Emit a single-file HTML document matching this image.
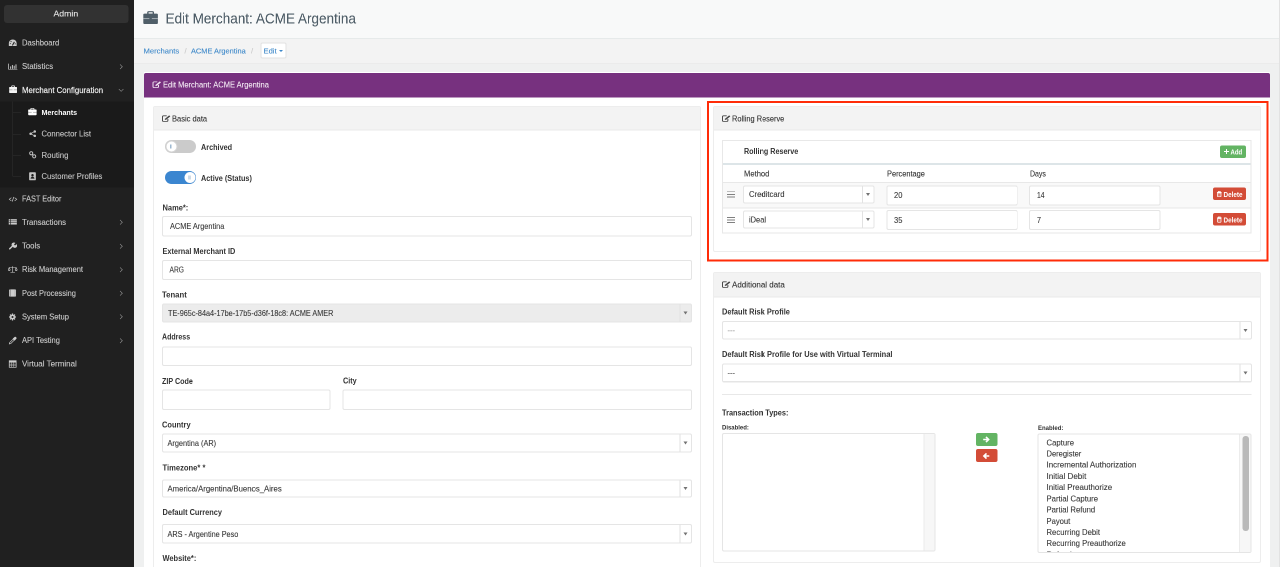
<!DOCTYPE html>
<html><head><meta charset="utf-8">
<style>
*{box-sizing:border-box}
html,body{margin:0;padding:0}
body{width:1280px;height:567px;overflow:hidden;position:relative;background:#eff0f0;font-family:"Liberation Sans",sans-serif;color:#333}
#w{position:absolute;left:0;top:0;width:2560px;height:1134px;transform:scale(0.5);transform-origin:0 0;will-change:transform}
.a{position:absolute}
.t{position:absolute;white-space:nowrap;line-height:1;}
.chev{position:absolute;width:6.8px;height:6.8px;border-right:1.8px solid #a8a8a8;border-top:1.8px solid #a8a8a8}
.ar{position:absolute;width:0;height:0;border-left:5px solid transparent;border-right:5px solid transparent;border-top:6px solid #777}
</style></head>
<body><div id="w">
<div class="a" style="left:0;top:0;width:268px;height:1134px;background:#202020"></div>
<div class="a" style="left:8px;top:9.6px;width:249.2px;height:36px;background:#323232;border-radius:6px"></div>
<div class="t" style="left:107.2px;top:19.08px;font-size:17.4px;color:#e8e8e8;font-weight:400;transform:scaleX(1.0021);transform-origin:0 0;-webkit-text-stroke:0.2px #e8e8e8;">Admin</div>
<div class="a" style="left:0;top:202.6px;width:268px;height:172px;background:#1a1a1a"></div>
<div class="t" style="left:44px;top:78px;font-size:15.6px;color:#cdcdcd;font-weight:400;transform:scaleX(0.9778);transform-origin:0 0;-webkit-text-stroke:0.2px #cdcdcd;">Dashboard</div>
<svg class="a" style="left:17.2px;top:79px" width="17" height="13.2" viewBox="0 0 10 10" preserveAspectRatio="none"><path d="M0.4 10 V5.4 A4.6 5.4 0 0 1 9.6 5.4 V10 Z" fill="#cdcdcd"/><path d="M4.6 9 L6.9 3.6" stroke="#202020" stroke-width="1.3"/><circle cx="2.2" cy="6.3" r="0.7" fill="#202020"/><circle cx="3" cy="3.2" r="0.7" fill="#202020"/><circle cx="7.9" cy="6.6" r="0.7" fill="#202020"/></svg>
<div class="t" style="left:44px;top:125.4px;font-size:15.6px;color:#cdcdcd;font-weight:400;transform:scaleX(0.9969);transform-origin:0 0;-webkit-text-stroke:0.2px #cdcdcd;">Statistics</div>
<svg class="a" style="left:16.2px;top:126px" width="18.8" height="13.6" viewBox="0 0 10 10" preserveAspectRatio="none"><path d="M0.6 1 V9.2 H10" stroke="#cdcdcd" stroke-width="0.8" fill="none"/><rect x="2.3" y="5" width="1" height="3.6" fill="#cdcdcd"/><rect x="4.2" y="3" width="1" height="5.6" fill="#cdcdcd"/><rect x="6.1" y="4" width="1" height="4.6" fill="#cdcdcd"/><rect x="8" y="2" width="1" height="6.6" fill="#cdcdcd"/></svg>
<div class="chev" style="left:237.2px;top:129.8px;transform:rotate(45deg)"></div>
<div class="t" style="left:44px;top:172.6px;font-size:15.6px;color:#f4f4f4;font-weight:400;-webkit-text-stroke:0.3px #f2f2f2">Merchant Configuration</div>
<svg class="a" style="left:17.6px;top:171px" width="16.6" height="15" viewBox="0 0 10 10" preserveAspectRatio="none"><rect x="3.2" y="0.5" width="3.6" height="2.2" rx="0.6" fill="none" stroke="#f4f4f4" stroke-width="0.9"/><rect x="0.2" y="2" width="9.6" height="8" rx="0.9" fill="#f4f4f4"/><rect x="0.2" y="5.5" width="9.6" height="0.7" fill="#202020" opacity="0.55"/><rect x="4.2" y="5.2" width="1.6" height="1.3" fill="#f4f4f4"/></svg>
<div class="chev" style="left:238.6px;top:175.2px;transform:rotate(135deg)"></div>
<div class="t" style="left:44px;top:389.6px;font-size:15.6px;color:#cdcdcd;font-weight:400;transform:scaleX(0.9405);transform-origin:0 0;-webkit-text-stroke:0.2px #cdcdcd;">FAST Editor</div>
<svg class="a" style="left:16.8px;top:391.6px" width="18" height="13.2" viewBox="0 0 10 10" preserveAspectRatio="none"><path d="M3.2 2.5 L0.8 5 L3.2 7.5 M6.8 2.5 L9.2 5 L6.8 7.5 M5.9 1.5 L4.1 8.5" stroke="#cdcdcd" stroke-width="0.8" fill="none"/></svg>
<div class="t" style="left:44px;top:436.8px;font-size:15.6px;color:#cdcdcd;font-weight:400;transform:scaleX(0.9921);transform-origin:0 0;-webkit-text-stroke:0.2px #cdcdcd;">Transactions</div>
<svg class="a" style="left:17.2px;top:437.2px" width="17.2" height="13.4" viewBox="0 0 10 10" preserveAspectRatio="none"><rect x="0.3" y="1" width="9.4" height="8" fill="#cdcdcd"/><path d="M0.3 3.6 H9.7 M0.3 6.3 H9.7 M2.4 1 V9" stroke="#202020" stroke-width="0.7"/></svg>
<div class="chev" style="left:237.2px;top:441.2px;transform:rotate(45deg)"></div>
<div class="t" style="left:44px;top:484.2px;font-size:15.6px;color:#cdcdcd;font-weight:400;transform:scaleX(0.9943);transform-origin:0 0;-webkit-text-stroke:0.2px #cdcdcd;">Tools</div>
<svg class="a" style="left:17.2px;top:484px" width="16.4" height="16" viewBox="0 0 10 10" preserveAspectRatio="none"><path d="M1.5 8.5 L5.2 4.8" stroke="#cdcdcd" stroke-width="1.8" stroke-linecap="round"/><path d="M4.6 5.4 A2.7 2.7 0 0 1 8.4 1.3 L6.9 2.8 L7.2 3.9 L8.3 4.2 L9.8 2.7 A2.7 2.7 0 0 1 5.6 6.4 Z" fill="#cdcdcd"/></svg>
<div class="chev" style="left:237.2px;top:488.6px;transform:rotate(45deg)"></div>
<div class="t" style="left:44px;top:531.4px;font-size:15.6px;color:#cdcdcd;font-weight:400;transform:scaleX(0.9708);transform-origin:0 0;-webkit-text-stroke:0.2px #cdcdcd;">Risk Management</div>
<svg class="a" style="left:16.4px;top:531px" width="18.8" height="15.2" viewBox="0 0 10 10" preserveAspectRatio="none"><path d="M5 1 V8.7 M2.6 9.2 H7.4 M1.3 2.6 H8.7 M1.3 2.6 L0.2 6 M1.3 2.6 L2.4 6 M8.7 2.6 L7.6 6 M8.7 2.6 L9.8 6" stroke="#cdcdcd" stroke-width="0.7" fill="none"/><path d="M0 6 A1.3 1.1 0 0 0 2.6 6 Z M7.4 6 A1.3 1.1 0 0 0 10 6 Z" fill="#cdcdcd"/></svg>
<div class="chev" style="left:237.2px;top:535.8px;transform:rotate(45deg)"></div>
<div class="t" style="left:44px;top:578.6px;font-size:15.6px;color:#cdcdcd;font-weight:400;transform:scaleX(0.9566);transform-origin:0 0;-webkit-text-stroke:0.2px #cdcdcd;">Post Processing</div>
<svg class="a" style="left:17.2px;top:578px" width="16" height="16" viewBox="0 0 10 10" preserveAspectRatio="none"><rect x="0.8" y="0.4" width="8.6" height="9.2" rx="1" fill="#cdcdcd"/><path d="M2.4 0.6 V9.4" stroke="#202020" stroke-width="0.7" opacity="0.5"/><path d="M8.2 0.6 V9.4" stroke="#202020" stroke-width="0.6" opacity="0.35"/></svg>
<div class="chev" style="left:237.2px;top:583px;transform:rotate(45deg)"></div>
<div class="t" style="left:44px;top:626px;font-size:15.6px;color:#cdcdcd;font-weight:400;transform:scaleX(0.9662);transform-origin:0 0;-webkit-text-stroke:0.2px #cdcdcd;">System Setup</div>
<svg class="a" style="left:17.2px;top:626px" width="16" height="16" viewBox="0 0 10 10" preserveAspectRatio="none"><circle cx="5" cy="5" r="3.1" fill="#cdcdcd"/><path d="M5 0.6 V9.4 M0.6 5 H9.4 M1.9 1.9 L8.1 8.1 M8.1 1.9 L1.9 8.1" stroke="#cdcdcd" stroke-width="1.6"/><circle cx="5" cy="5" r="1.3" fill="#202020"/></svg>
<div class="chev" style="left:237.2px;top:630.4px;transform:rotate(45deg)"></div>
<div class="t" style="left:44px;top:673.2px;font-size:15.6px;color:#cdcdcd;font-weight:400;transform:scaleX(0.9645);transform-origin:0 0;-webkit-text-stroke:0.2px #cdcdcd;">API Testing</div>
<svg class="a" style="left:17.2px;top:672.8px" width="16.8" height="16.4" viewBox="0 0 10 10" preserveAspectRatio="none"><path d="M1 9 L1.4 7.3 L5.6 3.1 L6.9 4.4 L2.7 8.6 Z" fill="none" stroke="#cdcdcd" stroke-width="0.8"/><path d="M5 2.6 L6.9 0.9 A1.2 1.2 0 0 1 9.1 3.1 L7.4 5 Z" fill="#cdcdcd"/></svg>
<div class="chev" style="left:237.2px;top:677.6px;transform:rotate(45deg)"></div>
<div class="t" style="left:44px;top:720.4px;font-size:15.6px;color:#cdcdcd;font-weight:400;transform:scaleX(1.0252);transform-origin:0 0;-webkit-text-stroke:0.2px #cdcdcd;">Virtual Terminal</div>
<svg class="a" style="left:17.2px;top:720px" width="16.8" height="16" viewBox="0 0 10 10" preserveAspectRatio="none"><rect x="0.9" y="0.9" width="8.2" height="8.2" fill="none" stroke="#cdcdcd" stroke-width="0.9"/><rect x="0.9" y="0.9" width="8.2" height="2.3" fill="#cdcdcd"/><path d="M0.9 5.1 H9.1 M0.9 7.1 H9.1 M3.6 3.2 V9.1 M6.3 3.2 V9.1" stroke="#cdcdcd" stroke-width="0.6"/></svg>
<div class="a" style="left:24px;top:203px;width:2px;height:150px;background:#252525"></div>
<div class="a" style="left:26px;top:224.2px;width:16px;height:2px;background:#252525"></div>
<div class="t" style="left:83.4px;top:216.96px;font-size:15.4px;color:#ffffff;font-weight:700;transform:scaleX(0.9249);transform-origin:0 0;">Merchants</div>
<svg class="a" style="left:56px;top:216.4px" width="17.6" height="14.4" viewBox="0 0 10 10" preserveAspectRatio="none"><rect x="3.2" y="0.5" width="3.6" height="2.2" rx="0.6" fill="none" stroke="#ffffff" stroke-width="0.9"/><rect x="0.2" y="2" width="9.6" height="8" rx="0.9" fill="#ffffff"/><rect x="0.2" y="5.5" width="9.6" height="0.7" fill="#1a1a1a" opacity="0.55"/><rect x="4.2" y="5.2" width="1.6" height="1.3" fill="#ffffff"/></svg>
<div class="a" style="left:26px;top:267.6px;width:16px;height:2px;background:#252525"></div>
<div class="t" style="left:83.4px;top:260.2px;font-size:15.6px;color:#c6c6c6;font-weight:400;transform:scaleX(0.9846);transform-origin:0 0;-webkit-text-stroke:0.2px #c6c6c6;">Connector List</div>
<svg class="a" style="left:57.8px;top:259.6px" width="14.8" height="14.8" viewBox="0 0 10 10" preserveAspectRatio="none"><circle cx="2.2" cy="5" r="1.7" fill="#c6c6c6"/><circle cx="7.8" cy="2" r="1.7" fill="#c6c6c6"/><circle cx="7.8" cy="8" r="1.7" fill="#c6c6c6"/><path d="M2.2 5 L7.8 2 M2.2 5 L7.8 8" stroke="#c6c6c6" stroke-width="1"/></svg>
<div class="a" style="left:26px;top:310.2px;width:16px;height:2px;background:#252525"></div>
<div class="t" style="left:83.4px;top:302.8px;font-size:15.6px;color:#c6c6c6;font-weight:400;transform:scaleX(1.0047);transform-origin:0 0;-webkit-text-stroke:0.2px #c6c6c6;">Routing</div>
<svg class="a" style="left:57.8px;top:302px" width="14.8" height="15.2" viewBox="0 0 10 10" preserveAspectRatio="none"><circle cx="3" cy="3" r="2.1" fill="none" stroke="#c6c6c6" stroke-width="1.3"/><circle cx="7" cy="7" r="2.1" fill="none" stroke="#c6c6c6" stroke-width="1.3"/><path d="M4.5 4.5 L5.5 5.5" stroke="#c6c6c6" stroke-width="1.2"/></svg>
<div class="a" style="left:26px;top:352.4px;width:16px;height:2px;background:#252525"></div>
<div class="t" style="left:83.4px;top:345px;font-size:15.6px;color:#c6c6c6;font-weight:400;transform:scaleX(0.9813);transform-origin:0 0;-webkit-text-stroke:0.2px #c6c6c6;">Customer Profiles</div>
<svg class="a" style="left:56.6px;top:344px" width="16" height="17" viewBox="0 0 10 10" preserveAspectRatio="none"><rect x="0.8" y="0.3" width="8.4" height="9.4" rx="0.9" fill="#c6c6c6"/><circle cx="5" cy="3.9" r="1.5" fill="#1a1a1a"/><path d="M2.6 7.8 A2.4 2.1 0 0 1 7.4 7.8 Z" fill="#1a1a1a"/></svg>
<div class="a" style="left:268px;top:0;width:2292px;height:78px;background:#f8f9f9;border-bottom:2px solid #e6eaea"></div>
<div class="a" style="left:268px;top:78px;width:2292px;height:50px;background:#f3f3f3;border-bottom:2px solid #ebebeb"></div>
<div class="a" style="left:2558px;top:0;width:2px;height:1134px;background:#e2e2e2"></div>
<svg class="a" style="left:285.6px;top:21.8px" width="30.4" height="26" viewBox="0 0 10 10" preserveAspectRatio="none"><rect x="3.2" y="0.5" width="3.6" height="2.2" rx="0.6" fill="none" stroke="#4f5e68" stroke-width="0.9"/><rect x="0.2" y="2" width="9.6" height="8" rx="0.9" fill="#4f5e68"/><rect x="0.2" y="5.5" width="9.6" height="0.7" fill="#f8f9f9" opacity="0.55"/><rect x="4.2" y="5.2" width="1.6" height="1.3" fill="#4f5e68"/></svg>
<div class="t" style="left:331.2px;top:21.94px;font-size:29.6px;color:#4f5e68;font-weight:400;transform:scaleX(0.9150);transform-origin:0 0;-webkit-text-stroke:0.2px #4f5e68;">Edit Merchant: ACME Argentina</div>
<div class="t" style="left:286.6px;top:93.56px;font-size:15.4px;color:#3d88c9;font-weight:400;transform:scaleX(0.9936);transform-origin:0 0;-webkit-text-stroke:0.2px #3d88c9;">Merchants</div>
<div class="t" style="left:369px;top:93.74px;font-size:15.2px;color:#c8c8c8;font-weight:400;-webkit-text-stroke:0.2px #c8c8c8;">/</div>
<div class="t" style="left:382.2px;top:93.56px;font-size:15.4px;color:#3d88c9;font-weight:400;transform:scaleX(0.9615);transform-origin:0 0;-webkit-text-stroke:0.2px #3d88c9;">ACME Argentina</div>
<div class="t" style="left:502px;top:93.74px;font-size:15.2px;color:#c8c8c8;font-weight:400;-webkit-text-stroke:0.2px #c8c8c8;">/</div>
<div class="a" style="left:520.6px;top:84.8px;width:52.8px;height:32.2px;background:#fff;border:2px solid #e2e2e2;border-radius:4px"></div>
<div class="t" style="left:527.2px;top:93.56px;font-size:15.4px;color:#3d88c9;font-weight:400;transform:scaleX(0.9875);transform-origin:0 0;-webkit-text-stroke:0.2px #3d88c9;">Edit</div>
<div class="ar" style="left:558.4px;top:100px;border-left-width:4.2px;border-right-width:4.2px;border-top:4.6px solid #3d88c9"></div>
<div class="a" style="left:288px;top:144px;width:2252px;height:990px;background:#fff"></div>
<div class="a" style="left:288px;top:146px;width:2252px;height:49px;background:#77317f;border-radius:4px 4px 0 0"></div>
<svg class="a" style="left:304.8px;top:162px" width="17.2" height="14" viewBox="0 0 10 10" preserveAspectRatio="none"><path d="M5.6 1.2 H1.9 Q0.6 1.2 0.6 2.5 V8 Q0.6 9.3 1.9 9.3 H5.7 Q7 9.3 7 8 V5.8" fill="none" stroke="#f1e6f2" stroke-width="1.15"/><path d="M3.2 7.3 L3.8 5.3 L8.5 0.6 L9.9 2 L5.2 6.7 Z" fill="#f1e6f2"/></svg>
<div class="t" style="left:325.6px;top:162.22px;font-size:15.8px;color:#f6eef6;font-weight:400;transform:scaleX(0.9534);transform-origin:0 0;-webkit-text-stroke:0.2px #f6eef6;">Edit Merchant: ACME Argentina</div>
<div class="a" style="left:306px;top:212px;width:1096px;height:940px;background:#fff;border:2px solid #ededed;border-radius:4px"></div>
<div class="a" style="left:308px;top:214px;width:1092px;height:47px;background:#f3f3f3;border-bottom:2px solid #e9e9e9"></div>
<svg class="a" style="left:324.2px;top:230.2px" width="16.8" height="13.8" viewBox="0 0 10 10" preserveAspectRatio="none"><path d="M5.6 1.2 H1.9 Q0.6 1.2 0.6 2.5 V8 Q0.6 9.3 1.9 9.3 H5.7 Q7 9.3 7 8 V5.8" fill="none" stroke="#444" stroke-width="1.15"/><path d="M3.2 7.3 L3.8 5.3 L8.5 0.6 L9.9 2 L5.2 6.7 Z" fill="#444"/></svg>
<div class="t" style="left:344.4px;top:230.22px;font-size:15.8px;color:#333;font-weight:400;transform:scaleX(0.9517);transform-origin:0 0;-webkit-text-stroke:0.2px #333;">Basic data</div>
<div class="a" style="left:330px;top:280px;width:62px;height:26px;background:#cbcbcb;border-radius:14px"></div>
<div class="a" style="left:331px;top:281px;width:24px;height:24px;background:#fff;border-radius:50%;border:2px solid #d4d4d4"></div>
<div class="a" style="left:340.4px;top:289.2px;width:3px;height:8px;background:#9db8d0"></div>
<div class="t" style="left:401.8px;top:287px;font-size:15.6px;color:#333333;font-weight:700;transform:scaleX(0.9321);transform-origin:0 0;">Archived</div>
<div class="a" style="left:330px;top:342px;width:62px;height:26px;background:#3b86d0;border-radius:14px"></div>
<div class="a" style="left:368.8px;top:343.8px;width:22.4px;height:22.4px;background:#fff;border-radius:50%"></div>
<div class="a" style="left:377px;top:350.8px;width:1.6px;height:8.4px;background:#9db8d0"></div>
<div class="a" style="left:380.8px;top:350.8px;width:1.6px;height:8.4px;background:#9db8d0"></div>
<div class="t" style="left:401.8px;top:348.8px;font-size:15.6px;color:#333333;font-weight:700;transform:scaleX(0.9323);transform-origin:0 0;">Active (Status)</div>
<div class="t" style="left:325px;top:407.8px;font-size:15.6px;color:#333333;font-weight:700;transform:scaleX(0.9603);transform-origin:0 0;">Name*:</div>
<div class="a" style="left:324px;top:432px;width:1059.6px;height:41px;background:#fff;border:2px solid #e5e5e5;border-radius:4px"></div>
<div class="t" style="left:339.6px;top:444.6px;font-size:15.6px;color:#383838;font-weight:400;transform:scaleX(0.9420);transform-origin:0 0;-webkit-text-stroke:0.2px #383838;">ACME Argentina</div>
<div class="t" style="left:325px;top:495px;font-size:15.6px;color:#333333;font-weight:700;transform:scaleX(0.9386);transform-origin:0 0;">External Merchant ID</div>
<div class="a" style="left:324px;top:520px;width:1059.6px;height:40px;background:#fff;border:2px solid #e5e5e5;border-radius:4px"></div>
<div class="t" style="left:339.2px;top:532.4px;font-size:15.6px;color:#383838;font-weight:400;transform:scaleX(0.8581);transform-origin:0 0;-webkit-text-stroke:0.2px #383838;">ARG</div>
<div class="t" style="left:324.2px;top:582.4px;font-size:15.6px;color:#333333;font-weight:700;transform:scaleX(0.9926);transform-origin:0 0;">Tenant</div>
<div class="a" style="left:324px;top:607px;width:1059.6px;height:38.4px;background:#ececec;border:2px solid #e5e5e5;border-radius:4px"></div>
<div class="a" style="left:1359px;top:608px;width:2px;height:36.4px;background:#e2e2e2"></div>
<div class="ar" style="left:1366.8px;top:623.4px;border-left-width:4.8px;border-right-width:4.8px;border-top:6px solid #737373"></div>
<div class="t" style="left:335.6px;top:618.8px;font-size:15.6px;color:#383838;font-weight:400;transform:scaleX(0.9331);transform-origin:0 0;-webkit-text-stroke:0.2px #383838;">TE-965c-84a4-17be-17b5-d36f-18c8: ACME AMER</div>
<div class="t" style="left:324.2px;top:666.4px;font-size:15.6px;color:#333333;font-weight:700;transform:scaleX(0.9006);transform-origin:0 0;">Address</div>
<div class="a" style="left:324px;top:692.8px;width:1059.6px;height:39.6px;background:#fff;border:2px solid #e5e5e5;border-radius:4px"></div>
<div class="t" style="left:324.4px;top:754.8px;font-size:15.6px;color:#333333;font-weight:700;transform:scaleX(0.9153);transform-origin:0 0;">ZIP Code</div>
<div class="a" style="left:324px;top:779.2px;width:337.2px;height:40.6px;background:#fff;border:2px solid #e5e5e5;border-radius:4px"></div>
<div class="t" style="left:685.6px;top:754.4px;font-size:15.6px;color:#333333;font-weight:700;transform:scaleX(0.9230);transform-origin:0 0;">City</div>
<div class="a" style="left:684.8px;top:779.2px;width:698.8px;height:40.6px;background:#fff;border:2px solid #e5e5e5;border-radius:4px"></div>
<div class="t" style="left:324.4px;top:841.6px;font-size:15.6px;color:#333333;font-weight:700;transform:scaleX(0.9568);transform-origin:0 0;">Country</div>
<div class="a" style="left:324px;top:866.6px;width:1059.6px;height:38.4px;background:#fff;border:2px solid #e5e5e5;border-radius:4px"></div>
<div class="a" style="left:1359px;top:867.6px;width:2px;height:36.4px;background:#e2e2e2"></div>
<div class="ar" style="left:1366.8px;top:883px;border-left-width:4.8px;border-right-width:4.8px;border-top:6px solid #737373"></div>
<div class="t" style="left:335.2px;top:879.2px;font-size:15.6px;color:#383838;font-weight:400;transform:scaleX(0.9424);transform-origin:0 0;-webkit-text-stroke:0.2px #383838;">Argentina (AR)</div>
<div class="t" style="left:324.6px;top:927.6px;font-size:15.6px;color:#333333;font-weight:700;transform:scaleX(0.9738);transform-origin:0 0;">Timezone* *</div>
<div class="a" style="left:324px;top:958.6px;width:1059.6px;height:36.8px;background:#fff;border:2px solid #e5e5e5;border-radius:4px"></div>
<div class="a" style="left:1359px;top:959.6px;width:2px;height:34.8px;background:#e2e2e2"></div>
<div class="ar" style="left:1366.8px;top:974.2px;border-left-width:4.8px;border-right-width:4.8px;border-top:6px solid #737373"></div>
<div class="t" style="left:334.8px;top:969.8px;font-size:15.6px;color:#383838;font-weight:400;transform:scaleX(0.9943);transform-origin:0 0;-webkit-text-stroke:0.2px #383838;">America/Argentina/Buenos_Aires</div>
<div class="t" style="left:324.6px;top:1017.4px;font-size:15.6px;color:#333333;font-weight:700;transform:scaleX(0.9470);transform-origin:0 0;">Default Currency</div>
<div class="a" style="left:324px;top:1048.4px;width:1059.6px;height:38.4px;background:#fff;border:2px solid #e5e5e5;border-radius:4px"></div>
<div class="a" style="left:1359px;top:1049.4px;width:2px;height:36.4px;background:#e2e2e2"></div>
<div class="ar" style="left:1366.8px;top:1064.8px;border-left-width:4.8px;border-right-width:4.8px;border-top:6px solid #737373"></div>
<div class="t" style="left:334.8px;top:1060.8px;font-size:15.6px;color:#383838;font-weight:400;transform:scaleX(0.9334);transform-origin:0 0;-webkit-text-stroke:0.2px #383838;">ARS - Argentine Peso</div>
<div class="t" style="left:324.6px;top:1108.8px;font-size:15.6px;color:#333333;font-weight:700;transform:scaleX(0.9551);transform-origin:0 0;">Website*:</div>
<div class="a" style="left:1426px;top:212px;width:1096px;height:292px;background:#fff;border:2px solid #ededed;border-radius:4px"></div>
<div class="a" style="left:1428px;top:214px;width:1092px;height:47px;background:#f3f3f3;border-bottom:2px solid #e9e9e9"></div>
<svg class="a" style="left:1444.2px;top:230.2px" width="16.8" height="13.8" viewBox="0 0 10 10" preserveAspectRatio="none"><path d="M5.6 1.2 H1.9 Q0.6 1.2 0.6 2.5 V8 Q0.6 9.3 1.9 9.3 H5.7 Q7 9.3 7 8 V5.8" fill="none" stroke="#444" stroke-width="1.15"/><path d="M3.2 7.3 L3.8 5.3 L8.5 0.6 L9.9 2 L5.2 6.7 Z" fill="#444"/></svg>
<div class="t" style="left:1464.4px;top:230.22px;font-size:15.8px;color:#333;font-weight:400;transform:scaleX(0.9380);transform-origin:0 0;-webkit-text-stroke:0.2px #333;">Rolling Reserve</div>
<div class="a" style="left:1444px;top:280px;width:1059px;height:187px;border:2px solid #e8e8e8;background:#fff"></div>
<div class="a" style="left:1446px;top:326px;width:1055px;height:4px;background:#dde5e8"></div>
<div class="a" style="left:1446px;top:364px;width:1055px;height:2px;background:#e8e8e8"></div>
<div class="a" style="left:1446px;top:366px;width:1055px;height:48.6px;background:#f9f9f9"></div>
<div class="a" style="left:1446px;top:414.6px;width:1055px;height:2px;background:#e8e8e8"></div>
<div class="t" style="left:1487.6px;top:294.8px;font-size:15.6px;color:#333333;font-weight:700;transform:scaleX(0.9197);transform-origin:0 0;">Rolling Reserve</div>
<div class="a" style="left:2440px;top:290.6px;width:52px;height:25.2px;background:#63b463;border-radius:4px"></div>
<div class="t" style="left:2461.2px;top:297.34px;font-size:14px;color:#fff;font-weight:700;transform:scaleX(0.8597);transform-origin:0 0;">Add</div>
<div class="a" style="left:2448.4px;top:301.8px;width:9.6px;height:2.6px;background:#fff"></div>
<div class="a" style="left:2451.9px;top:298.4px;width:2.6px;height:9.6px;background:#fff"></div>
<div class="t" style="left:1487.6px;top:339.8px;font-size:15.6px;color:#333;font-weight:400;transform:scaleX(0.9766);transform-origin:0 0;-webkit-text-stroke:0.2px #333;">Method</div>
<div class="t" style="left:1773.6px;top:339.8px;font-size:15.6px;color:#333;font-weight:400;transform:scaleX(0.9503);transform-origin:0 0;-webkit-text-stroke:0.2px #333;">Percentage</div>
<div class="t" style="left:2059.6px;top:339.8px;font-size:15.6px;color:#333;font-weight:400;transform:scaleX(0.8950);transform-origin:0 0;-webkit-text-stroke:0.2px #333;">Days</div>
<div class="a" style="left:1454.2px;top:382.6px;width:15.4px;height:1.8px;background:#808080"></div>
<div class="a" style="left:1454.2px;top:387.9px;width:15.4px;height:1.8px;background:#808080"></div>
<div class="a" style="left:1454.2px;top:393.2px;width:15.4px;height:1.8px;background:#808080"></div>
<div class="a" style="left:1486.4px;top:371px;width:262.4px;height:36.2px;background:#fff;border:2px solid #e5e5e5;border-radius:4px"></div>
<div class="a" style="left:1724.2px;top:372px;width:2px;height:34.2px;background:#e2e2e2"></div>
<div class="ar" style="left:1732px;top:386.3px;border-left-width:4.8px;border-right-width:4.8px;border-top:6px solid #737373"></div>
<div class="t" style="left:1497.8px;top:381px;font-size:15.6px;color:#383838;font-weight:400;transform:scaleX(0.9870);transform-origin:0 0;-webkit-text-stroke:0.2px #383838;">Creditcard</div>
<div class="a" style="left:1772.6px;top:370.8px;width:262.2px;height:39.8px;background:#fff;border:2px solid #e5e5e5;border-radius:4px"></div>
<div class="t" style="left:1787.6px;top:382.8px;font-size:15.6px;color:#383838;font-weight:400;transform:scaleX(0.9678);transform-origin:0 0;-webkit-text-stroke:0.2px #383838;">20</div>
<div class="a" style="left:2058px;top:370.8px;width:262.6px;height:39.8px;background:#fff;border:2px solid #e5e5e5;border-radius:4px"></div>
<div class="t" style="left:2074.4px;top:382.8px;font-size:15.6px;color:#383838;font-weight:400;transform:scaleX(0.8756);transform-origin:0 0;-webkit-text-stroke:0.2px #383838;">14</div>
<div class="a" style="left:2426.2px;top:374.8px;width:65.8px;height:25.4px;background:#d34c37;border-radius:4px"></div>
<svg class="a" style="left:2433.2px;top:382px" width="11.2" height="12.4" viewBox="0 0 10 11"><path d="M0.8 2.4 H9.2 M3.2 2.2 V0.9 H6.8 V2.2" stroke="#fff" stroke-width="1.3" fill="none"/><path d="M2 3.4 H8 V9.4 Q8 10.3 7.1 10.3 H2.9 Q2 10.3 2 9.4 Z" fill="none" stroke="#fff" stroke-width="1.4"/><path d="M4 4.5 V9 M6 4.5 V9" stroke="#fff" stroke-width="0.8" opacity="0.6"/></svg>
<div class="t" style="left:2447.4px;top:381.94px;font-size:14px;color:#fff;font-weight:700;transform:scaleX(0.9041);transform-origin:0 0;">Delete</div>
<div class="a" style="left:1454.2px;top:433.8px;width:15.4px;height:1.8px;background:#808080"></div>
<div class="a" style="left:1454.2px;top:439.1px;width:15.4px;height:1.8px;background:#808080"></div>
<div class="a" style="left:1454.2px;top:444.4px;width:15.4px;height:1.8px;background:#808080"></div>
<div class="a" style="left:1486.4px;top:420.6px;width:262.4px;height:36.2px;background:#fff;border:2px solid #e5e5e5;border-radius:4px"></div>
<div class="a" style="left:1724.2px;top:421.6px;width:2px;height:34.2px;background:#e2e2e2"></div>
<div class="ar" style="left:1732px;top:435.9px;border-left-width:4.8px;border-right-width:4.8px;border-top:6px solid #737373"></div>
<div class="t" style="left:1497.8px;top:432.2px;font-size:15.6px;color:#383838;font-weight:400;transform:scaleX(0.9565);transform-origin:0 0;-webkit-text-stroke:0.2px #383838;">iDeal</div>
<div class="a" style="left:1772.6px;top:420.4px;width:262.2px;height:39.8px;background:#fff;border:2px solid #e5e5e5;border-radius:4px"></div>
<div class="t" style="left:1787.6px;top:433px;font-size:15.6px;color:#383838;font-weight:400;transform:scaleX(0.9678);transform-origin:0 0;-webkit-text-stroke:0.2px #383838;">35</div>
<div class="a" style="left:2058px;top:420.4px;width:262.6px;height:39.8px;background:#fff;border:2px solid #e5e5e5;border-radius:4px"></div>
<div class="t" style="left:2074.4px;top:433px;font-size:15.6px;color:#383838;font-weight:400;transform:scaleX(0.9209);transform-origin:0 0;-webkit-text-stroke:0.2px #383838;">7</div>
<div class="a" style="left:2426.2px;top:426px;width:65.8px;height:25.4px;background:#d34c37;border-radius:4px"></div>
<svg class="a" style="left:2433.2px;top:433.2px" width="11.2" height="12.4" viewBox="0 0 10 11"><path d="M0.8 2.4 H9.2 M3.2 2.2 V0.9 H6.8 V2.2" stroke="#fff" stroke-width="1.3" fill="none"/><path d="M2 3.4 H8 V9.4 Q8 10.3 7.1 10.3 H2.9 Q2 10.3 2 9.4 Z" fill="none" stroke="#fff" stroke-width="1.4"/><path d="M4 4.5 V9 M6 4.5 V9" stroke="#fff" stroke-width="0.8" opacity="0.6"/></svg>
<div class="t" style="left:2447.4px;top:433.14px;font-size:14px;color:#fff;font-weight:700;transform:scaleX(0.9041);transform-origin:0 0;">Delete</div>
<div class="a" style="left:1414px;top:202px;width:1123px;height:321px;border:4px solid #ff2c08"></div>
<div class="a" style="left:1426px;top:544px;width:1096px;height:582px;background:#fff;border:2px solid #ededed;border-radius:4px"></div>
<div class="a" style="left:1428px;top:546px;width:1092px;height:48.8px;background:#f3f3f3;border-bottom:2px solid #e9e9e9"></div>
<svg class="a" style="left:1444.2px;top:562.2px" width="16.8" height="13.8" viewBox="0 0 10 10" preserveAspectRatio="none"><path d="M5.6 1.2 H1.9 Q0.6 1.2 0.6 2.5 V8 Q0.6 9.3 1.9 9.3 H5.7 Q7 9.3 7 8 V5.8" fill="none" stroke="#444" stroke-width="1.15"/><path d="M3.2 7.3 L3.8 5.3 L8.5 0.6 L9.9 2 L5.2 6.7 Z" fill="#444"/></svg>
<div class="t" style="left:1464.4px;top:562.22px;font-size:15.8px;color:#333;font-weight:400;transform:scaleX(1.0104);transform-origin:0 0;-webkit-text-stroke:0.2px #333;">Additional data</div>
<div class="t" style="left:1444px;top:615.8px;font-size:15.6px;color:#333333;font-weight:700;transform:scaleX(0.9498);transform-origin:0 0;">Default Risk Profile</div>
<div class="a" style="left:1444px;top:642.2px;width:1060px;height:36.6px;background:#fff;border:2px solid #e5e5e5;border-radius:4px"></div>
<div class="a" style="left:2479.4px;top:643.2px;width:2px;height:34.6px;background:#e2e2e2"></div>
<div class="ar" style="left:2487.2px;top:657.7px;border-left-width:4.8px;border-right-width:4.8px;border-top:6px solid #737373"></div>
<div class="t" style="left:1454.8px;top:654.22px;font-size:14.4px;color:#9a9a9a;font-weight:400;transform:scaleX(1.0423);transform-origin:0 0;-webkit-text-stroke:0.2px #9a9a9a;">---</div>
<div class="t" style="left:1444px;top:700.6px;font-size:15.6px;color:#333333;font-weight:700;transform:scaleX(0.9538);transform-origin:0 0;">Default Risk Profile for Use with Virtual Terminal</div>
<div class="a" style="left:1444px;top:726.8px;width:1060px;height:37.8px;background:#fff;border:2px solid #e5e5e5;border-radius:4px"></div>
<div class="a" style="left:2479.4px;top:727.8px;width:2px;height:35.8px;background:#e2e2e2"></div>
<div class="ar" style="left:2487.2px;top:742.9px;border-left-width:4.8px;border-right-width:4.8px;border-top:6px solid #737373"></div>
<div class="t" style="left:1454.8px;top:739.02px;font-size:14.4px;color:#555;font-weight:400;transform:scaleX(1.0423);transform-origin:0 0;-webkit-text-stroke:0.2px #555;">---</div>
<div class="a" style="left:1444px;top:788px;width:1059px;height:2px;background:#e8e8e8"></div>
<div class="t" style="left:1444px;top:817.6px;font-size:15.6px;color:#333333;font-weight:700;transform:scaleX(0.9421);transform-origin:0 0;">Transaction Types:</div>
<div class="t" style="left:1444px;top:848.42px;font-size:13.2px;color:#333333;font-weight:700;transform:scaleX(0.9063);transform-origin:0 0;">Disabled:</div>
<div class="t" style="left:2075.6px;top:848.62px;font-size:13.2px;color:#333333;font-weight:700;transform:scaleX(0.9122);transform-origin:0 0;">Enabled:</div>
<div class="a" style="left:1444px;top:866.4px;width:427px;height:236.2px;background:#fff;border:2px solid #e5e5e5;border-radius:4px"></div>
<div class="a" style="left:1846.6px;top:868.4px;width:22.8px;height:232.2px;background:#f7f7f7;border-left:2px solid #ececec"></div>
<div class="a" style="left:2075.2px;top:866.8px;width:428px;height:239.4px;background:#fff;border:2px solid #e5e5e5;border-radius:4px"></div>
<div class="a" style="left:2478.4px;top:868.8px;width:22.8px;height:235.4px;background:#f7f7f7;border-left:2px solid #ececec"></div>
<div class="a" style="left:2485.2px;top:871.6px;width:12.6px;height:190.4px;background:#b9b9b9;border-radius:6px"></div>
<div class="a" style="left:1952.2px;top:866px;width:42.8px;height:26px;background:#63b463;border-radius:4px"></div>
<div class="a" style="left:1952.2px;top:898.4px;width:42.8px;height:25.4px;background:#d34c37;border-radius:4px"></div>
<svg class="a" style="left:1964px;top:871px" width="16" height="16" viewBox="0 0 10 10"><path d="M1.5 5 H8 M5 1.8 L8.3 5 L5 8.2" stroke="#fff" stroke-width="2" fill="none"/></svg>
<svg class="a" style="left:1965px;top:903.6px" width="16" height="16" viewBox="0 0 10 10"><path d="M8.5 5 H2 M5 1.8 L1.7 5 L5 8.2" stroke="#fff" stroke-width="2" fill="none"/></svg>
<div class="a" style="left:2077.2px;top:868.4px;width:400px;height:236px;overflow:hidden">
<div class="t" style="left:16.2px;top:9.2px;font-size:15.6px;color:#383838;font-weight:400;transform:scaleX(0.9913);transform-origin:0 0;-webkit-text-stroke:0.2px #383838;">Capture</div>
<div class="t" style="left:16.2px;top:31.62px;font-size:15.6px;color:#383838;font-weight:400;transform:scaleX(0.9675);transform-origin:0 0;-webkit-text-stroke:0.2px #383838;">Deregister</div>
<div class="t" style="left:16.2px;top:54.04px;font-size:15.6px;color:#383838;font-weight:400;transform:scaleX(1.0218);transform-origin:0 0;-webkit-text-stroke:0.2px #383838;">Incremental Authorization</div>
<div class="t" style="left:16.2px;top:76.46px;font-size:15.6px;color:#383838;font-weight:400;transform:scaleX(1.0319);transform-origin:0 0;-webkit-text-stroke:0.2px #383838;">Initial Debit</div>
<div class="t" style="left:16.2px;top:98.88px;font-size:15.6px;color:#383838;font-weight:400;transform:scaleX(1.0158);transform-origin:0 0;-webkit-text-stroke:0.2px #383838;">Initial Preauthorize</div>
<div class="t" style="left:16.2px;top:121.3px;font-size:15.6px;color:#383838;font-weight:400;transform:scaleX(0.9902);transform-origin:0 0;-webkit-text-stroke:0.2px #383838;">Partial Capture</div>
<div class="t" style="left:16.2px;top:143.72px;font-size:15.6px;color:#383838;font-weight:400;transform:scaleX(0.9855);transform-origin:0 0;-webkit-text-stroke:0.2px #383838;">Partial Refund</div>
<div class="t" style="left:16.2px;top:166.14px;font-size:15.6px;color:#383838;font-weight:400;transform:scaleX(0.9802);transform-origin:0 0;-webkit-text-stroke:0.2px #383838;">Payout</div>
<div class="t" style="left:16.2px;top:188.56px;font-size:15.6px;color:#383838;font-weight:400;transform:scaleX(0.9876);transform-origin:0 0;-webkit-text-stroke:0.2px #383838;">Recurring Debit</div>
<div class="t" style="left:16.2px;top:210.98px;font-size:15.6px;color:#383838;font-weight:400;transform:scaleX(0.9890);transform-origin:0 0;-webkit-text-stroke:0.2px #383838;">Recurring Preauthorize</div>
<div class="t" style="left:16.2px;top:233.4px;font-size:15.6px;color:#383838;font-weight:400;transform:scaleX(1.0060);transform-origin:0 0;-webkit-text-stroke:0.2px #383838;">Refund</div>
</div>
</div></body></html>
